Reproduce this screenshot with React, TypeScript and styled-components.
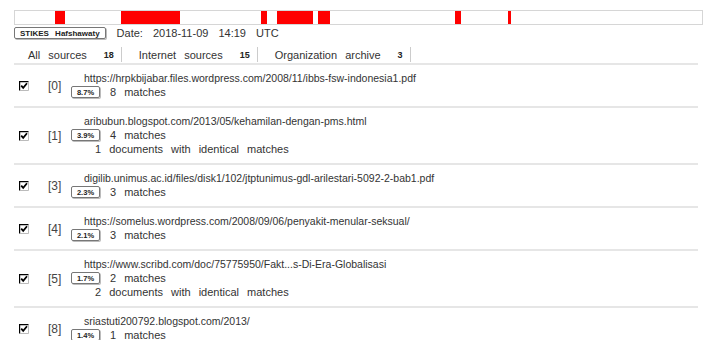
import styled, { createGlobalStyle } from "styled-components";

const GlobalStyle = createGlobalStyle`
    body {
        margin: 0;
        background: #fff;
        font-family: "Liberation Sans", Arial, sans-serif;
        color: #333;
    }
`

interface Segment { from: number, to: number }

interface Source {
    index: number,
    url: string,
    percent: string,
    matches: number,
    identical?: number
}

const segments: Segment[] = [
    { from: 40, to: 50 },
    { from: 106, to: 165 },
    { from: 246, to: 252 },
    { from: 262, to: 298 },
    { from: 303, to: 315 },
    { from: 440, to: 446 },
    { from: 493, to: 496 },
]

const sources: Source[] = [
    { index: 0, url: "https://hrpkbijabar.files.wordpress.com/2008/11/ibbs-fsw-indonesia1.pdf", percent: "8.7%", matches: 8 },
    { index: 1, url: "aribubun.blogspot.com/2013/05/kehamilan-dengan-pms.html", percent: "3.9%", matches: 4, identical: 1 },
    { index: 3, url: "digilib.unimus.ac.id/files/disk1/102/jtptunimus-gdl-arilestari-5092-2-bab1.pdf", percent: "2.3%", matches: 3 },
    { index: 4, url: "https://somelus.wordpress.com/2008/09/06/penyakit-menular-seksual/", percent: "2.1%", matches: 3 },
    { index: 5, url: "https://www.scribd.com/doc/75775950/Fakt...s-Di-Era-Globalisasi", percent: "1.7%", matches: 2, identical: 2 },
    { index: 8, url: "sriastuti200792.blogspot.com/2013/", percent: "1.4%", matches: 1 },
]

const Page = styled.div`
    padding: 10px 17px 0 14px;
    font-size: 11px;
    word-spacing: 5px;
`

const Strip = styled.div`
    position: relative;
    height: 13px;
    border: 1px solid #d6d6d6;
    width: 687px;
`

const Mark = styled.div`
    position: absolute;
    top: 0;
    bottom: 0;
    background: #ff0000;
`

const InfoRow = styled.div`
    display: flex;
    align-items: center;
    gap: 11px;
    margin-top: 2px;
    height: 12px;
`

const Tag = styled.span`
    display: inline-flex;
    align-items: center;
    height: 10px;
    padding: 0 5px;
    border: 1px solid #777;
    border-radius: 2px;
    box-shadow: 1px 1px 0 #bbb;
    font-size: 8px;
    font-weight: bold;
    color: #222;
    word-spacing: 4px;
`

const DateText = styled.span`
    font-size: 11px;
    word-spacing: 7px;
    color: #333;
`

const Tabs = styled.div`
    display: flex;
    margin-top: 8px;
    height: 15px;
    align-items: center;
    border-bottom: 2px solid #e6e6e6;
    width: 684px;
    padding-bottom: 1px;
`

const TabItem = styled.div`
    display: flex;
    align-items: center;
    gap: 17px;
    padding: 0 7px 0 17px;
    border-right: 1px solid #ccc;
    height: 15px;
    color: #333;
    &:first-child { padding-left: 14px; }
`

const Count = styled.b`
    font-size: 9px;
    color: #222;
`

const Row = styled.div`
    display: flex;
    align-items: center;
    padding: 6px 0 7px;
    border-bottom: 2px solid #e6e6e6;
    width: 684px;
`

const Check = styled.svg`
    flex: none;
    margin: 1px 10px 0 5px;
`

const Index = styled.span`
    width: 32px;
    padding-left: 9px;
    box-sizing: border-box;
    color: #444;
    font-size: 12px;
    margin-top: 2px;
`

const Content = styled.div`
    display: flex;
    flex-direction: column;
`

const Line = styled.div`
    height: 14px;
    display: flex;
    align-items: center;
    white-space: nowrap;
`

const Url = styled(Line)`
    padding-left: 13px;
    font-size: 10.5px;
`

const MatchLine = styled(Line)`
    gap: 10px;
`

const Identical = styled(Line)`
    padding-left: 24px;
`

const Percent = styled(Tag)`
    width: 17px;
    justify-content: center;
    font-size: 7.5px;
`

function CheckBox() {
    return <Check width="10" height="10" viewBox="0 0 10 10">
        <path d="M0.5 9.5V0.5H9.5" fill="none" stroke="#000" strokeWidth="1.4" />
        <path d="M9.5 1V9.5H1" fill="none" stroke="#bbb" strokeWidth="1" />
        <path d="M2.2 4.6L4.2 6.8L8 2.2" fill="none" stroke="#000" strokeWidth="1.8" />
    </Check>
}

export default function App() {
    return <Page>
        <GlobalStyle />
        <Strip>
            {segments.map(s => <Mark key={s.from} style={{ left: s.from, width: s.to - s.from }} />)}
        </Strip>
        <InfoRow>
            <Tag>STIKES Hafshawaty</Tag>
            <DateText>Date: 2018-11-09 14:19 UTC</DateText>
        </InfoRow>
        <Tabs>
            <TabItem>All sources <Count>18</Count></TabItem>
            <TabItem>Internet sources <Count>15</Count></TabItem>
            <TabItem>Organization archive <Count>3</Count></TabItem>
        </Tabs>
        {sources.map(s => <Row key={s.index}>
            <CheckBox />
            <Index>[{s.index}]</Index>
            <Content>
                <Url>{s.url}</Url>
                <MatchLine>
                    <Percent>{s.percent}</Percent>
                    <span>{s.matches} matches</span>
                </MatchLine>
                {s.identical !== undefined && <Identical>{s.identical} documents with identical matches</Identical>}
            </Content>
        </Row>)}
    </Page>
}
